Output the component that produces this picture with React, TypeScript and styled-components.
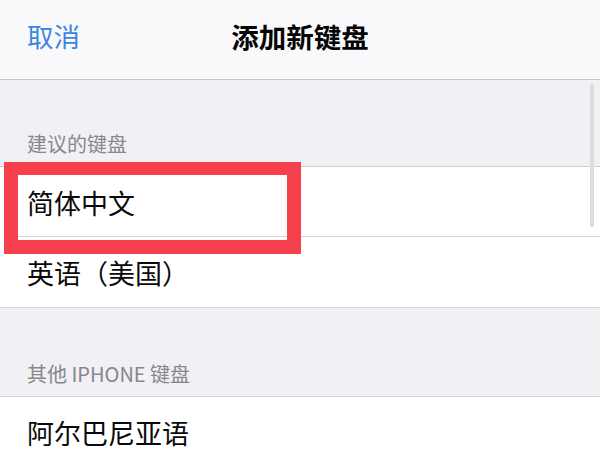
import React from "react";
import styled, { createGlobalStyle } from "styled-components";

const Global = createGlobalStyle`
  html, body { margin: 0; padding: 0; background: #f0f0f5; }
  body { font-family: "Noto Sans CJK SC", "Noto Sans", sans-serif; -webkit-font-smoothing: antialiased; }
  * { box-sizing: border-box; }
`;

const Screen = styled.div`
  position: relative;
  width: 600px;
  height: 450px;
  overflow: hidden;
  background: #f0f0f5;
`;

const NavBar = styled.header`
  height: 80px;
  background: #f9f9fb;
  border-bottom: 1px solid #c8c8cc;
  display: grid;
  grid-template-columns: 1fr auto 1fr;
  align-items: center;
  padding: 0 27px;
`;

const NavButton = styled.button`
  justify-self: start;
  background: none;
  border: 0;
  padding: 0;
  margin-top: -6px;
  font: inherit;
  font-size: 26.5px;
  color: #3d84e3;
  line-height: 1;
`;

const Title = styled.h1`
  margin: 0;
  margin-top: -6px;
  font-size: 27.5px;
  font-weight: 700;
  color: #050505;
  line-height: 1;
`;

const SectionHeader = styled.div<{ $h: number }>`
  height: ${(p) => p.$h}px;
  display: flex;
  align-items: flex-end;
  padding: 0 27px 12px;
  font-size: 20px;
  line-height: 1;
  color: #87878c;
  border-bottom: 1px solid #d0d0d4;
`;

const Group = styled.div`
  background: #ffffff;
  border-bottom: 1px solid #d6d6da;
`;

const Row = styled.div<{ $last?: boolean }>`
  height: 70px;
  display: flex;
  align-items: center;
  padding-left: 27px;
  font-size: 27px;
  line-height: 1;
  color: #0a0a0a;
  position: relative;
  &::after {
    content: "";
    display: ${(p) => (p.$last ? "none" : "block")};
    position: absolute;
    left: 17px;
    right: 0;
    bottom: 0;
    height: 1px;
    background: #d6d6da;
  }
`;

const Highlight = styled.div`
  position: absolute;
  left: 4px;
  top: 162px;
  width: 297px;
  height: 92px;
  border: 14px solid #f7404e;
  border-top-width: 13px;
  pointer-events: none;
`;

const ScrollThumb = styled.div`
  position: absolute;
  left: 590px;
  top: 84px;
  width: 4px;
  height: 143px;
  border-radius: 2px;
  background: #dcdce0;
`;

export default function App() {
  return (
    <Screen>
      <Global />
      <NavBar>
        <NavButton>取消</NavButton>
        <Title>添加新键盘</Title>
        <span />
      </NavBar>
      <SectionHeader $h={87}>建议的键盘</SectionHeader>
      <Group>
        <Row>简体中文</Row>
        <Row $last>英语（美国）</Row>
      </Group>
      <SectionHeader $h={89}>其他 IPHONE 键盘</SectionHeader>
      <Group>
        <Row>阿尔巴尼亚语</Row>
      </Group>
      <ScrollThumb />
      <Highlight />
    </Screen>
  );
}
